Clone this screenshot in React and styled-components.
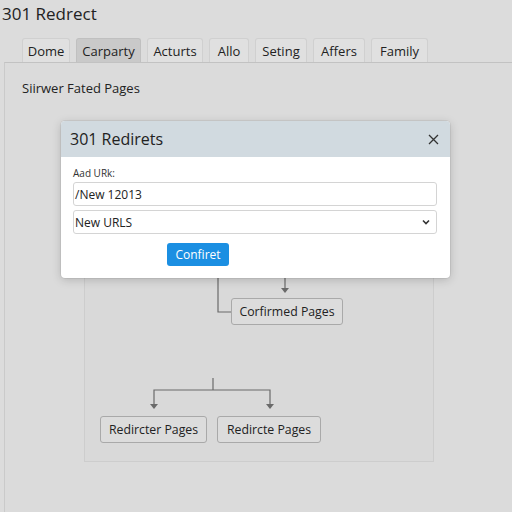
import React from "react";
import styled, { createGlobalStyle } from "styled-components";

const Global = createGlobalStyle`
  html, body { margin: 0; padding: 0; background: #dcdcdc; }
  body { font-family: "Open Sans", "Noto Sans", sans-serif; color: #222; }
  #root { width: 512px; height: 512px; overflow: hidden; }
`;

const Page = styled.div`
  position: relative;
  width: 512px;
  height: 512px;
  background: #dcdcdc;
  display: flex;
  flex-direction: column;
`;

const Title = styled.h1`
  margin: 0;
  height: 38px;
  padding: 3px 0 0 2px;
  box-sizing: border-box;
  font-size: 17px;
  font-weight: 400;
  line-height: 22px;
  color: #222;
`;

const Tabs = styled.div`
  display: flex;
  gap: 6px;
  padding-left: 22px;
  height: 24px;
`;

const Tab = styled.div`
  width: ${(p) => p.$w}px;
  height: 24px;
  box-sizing: border-box;
  display: flex;
  align-items: center;
  justify-content: center;
  font-size: 13px;
  color: #222;
  background: ${(p) => (p.$active ? "#c9c9c9" : "#e0e0e0")};
  border: 1px solid ${(p) => (p.$active ? "#c0c0c0" : "#d0d0d0")};
  border-bottom: none;
  border-radius: 3px 3px 0 0;
  white-space: nowrap;
`;

const Panel = styled.div`
  flex: 1;
  margin-left: 4px;
  border-top: 1px solid #c2c2c2;
  border-left: 1px solid #cacaca;
  background: #dbdbdb;
  display: flex;
  flex-direction: column;
`;

const SectionTitle = styled.div`
  padding: 14px 0 0 17px;
  height: 22px;
  font-size: 13px;
  line-height: 22px;
  color: #222;
`;

const DiagramBox = styled.div`
  position: relative;
  margin: 30px 0 0 79px;
  width: 350px;
  height: 333px;
  box-sizing: border-box;
  border: 1px solid #cdcdcd;
  background: #d9d9d9;
`;

const Connectors = styled.svg`
  position: absolute;
  left: 0;
  top: 0;
  overflow: visible;
`;

const Node = styled.div`
  position: absolute;
  box-sizing: border-box;
  height: 27px;
  display: flex;
  align-items: center;
  justify-content: center;
  font-size: 12.3px;
  color: #222;
  background: #dcdcdc;
  border: 1px solid #a9a9a9;
  border-radius: 3px;
  white-space: nowrap;
`;

const Modal = styled.div`
  position: absolute;
  left: 61px;
  top: 121px;
  width: 389px;
  height: 157px;
  background: #fff;
  border-radius: 4px;
  box-shadow: 0 2px 10px rgba(0, 0, 0, 0.18), 0 0 0 1px rgba(0, 0, 0, 0.05);
  overflow: hidden;
  display: flex;
  flex-direction: column;
`;

const ModalHeader = styled.div`
  height: 36px;
  background: #d1dae0;
  display: flex;
  align-items: center;
  justify-content: space-between;
  padding: 0 11px 0 9px;
`;

const ModalTitle = styled.div`
  font-size: 16px;
  color: #222;
`;

const Close = styled.svg`
  width: 11px;
  height: 11px;
`;

const ModalBody = styled.div`
  padding: 9px 13px 0 12px;
  display: flex;
  flex-direction: column;
`;

const Label = styled.div`
  font-size: 10px;
  line-height: 14px;
  height: 16px;
  color: #333;
`;

const Field = styled.div`
  height: 24px;
  box-sizing: border-box;
  border: 1px solid #d4d4d4;
  border-radius: 3px;
  display: flex;
  align-items: center;
  justify-content: space-between;
  padding: 0 6px 0 1px;
  margin-bottom: 4px;
  font-size: 12px;
  color: #222;
  background: #fff;
`;

const Chevron = styled.svg`
  width: 8px;
  height: 6px;
`;

const ButtonRow = styled.div`
  display: flex;
  padding-left: 94px;
  margin-top: 5px;
`;

const Button = styled.div`
  width: 62px;
  height: 23px;
  border-radius: 3px;
  background: #1b8fe2;
  color: #fff;
  font-size: 12px;
  display: flex;
  align-items: center;
  justify-content: center;
`;

const tabs = [
  ["Dome", 48],
  ["Carparty", 65],
  ["Acturts", 56],
  ["Allo", 40],
  ["Seting", 52],
  ["Affers", 52],
  ["Family", 57],
];

// diagram box content origin (page coords)
const OX = 85;
const OY = 130;

export default function App() {
  return (
    <Page>
      <Global />
      <Title>301 Redrect</Title>
      <Tabs>
        {tabs.map(([t, w]) => (
          <Tab key={t} $w={w} $active={t === "Carparty"}>
            {t}
          </Tab>
        ))}
      </Tabs>
      <Panel>
        <SectionTitle>Siirwer Fated Pages</SectionTitle>
        <DiagramBox>
          <Connectors width="348" height="331">
            <g stroke="#6a6a6a" strokeWidth="1.2" fill="none">
              <path d={`M${218 - OX} ${270 - OY} V${312 - OY} H${231 - OX}`} />
              <path d={`M${285 - OX} ${278 - OY} V${289 - OY}`} />
              <path d={`M${213 - OX} ${378 - OY} V${390 - OY}`} />
              <path d={`M${154 - OX} ${406 - OY} V${390 - OY} H${270 - OX} V${406 - OY}`} />
            </g>
            <g fill="#6a6a6a">
              <path d={`M${281 - OX} ${288 - OY} h8 l-4 5 z`} />
              <path d={`M${150 - OX} ${404 - OY} h8 l-4 5 z`} />
              <path d={`M${266 - OX} ${404 - OY} h8 l-4 5 z`} />
            </g>
          </Connectors>
          <Node style={{ left: 231 - OX, top: 298 - OY, width: 112 }}>Corfirmed Pages</Node>
          <Node style={{ left: 100 - OX, top: 416 - OY, width: 107 }}>Redircter Pages</Node>
          <Node style={{ left: 217 - OX, top: 416 - OY, width: 104 }}>Redircte Pages</Node>
        </DiagramBox>
      </Panel>
      <Modal>
        <ModalHeader>
          <ModalTitle>301 Redirets</ModalTitle>
          <Close viewBox="0 0 11 11">
            <path d="M1 1 L10 10 M10 1 L1 10" stroke="#333" strokeWidth="1.3" />
          </Close>
        </ModalHeader>
        <ModalBody>
          <Label>Aad URk:</Label>
          <Field>/New 12013</Field>
          <Field>
            <span>New URLS</span>
            <Chevron viewBox="0 0 8 6">
              <path d="M1 1.5 L4 4.5 L7 1.5" stroke="#333" strokeWidth="1.6" fill="none" />
            </Chevron>
          </Field>
          <ButtonRow>
            <Button>Confiret</Button>
          </ButtonRow>
        </ModalBody>
      </Modal>
    </Page>
  );
}
